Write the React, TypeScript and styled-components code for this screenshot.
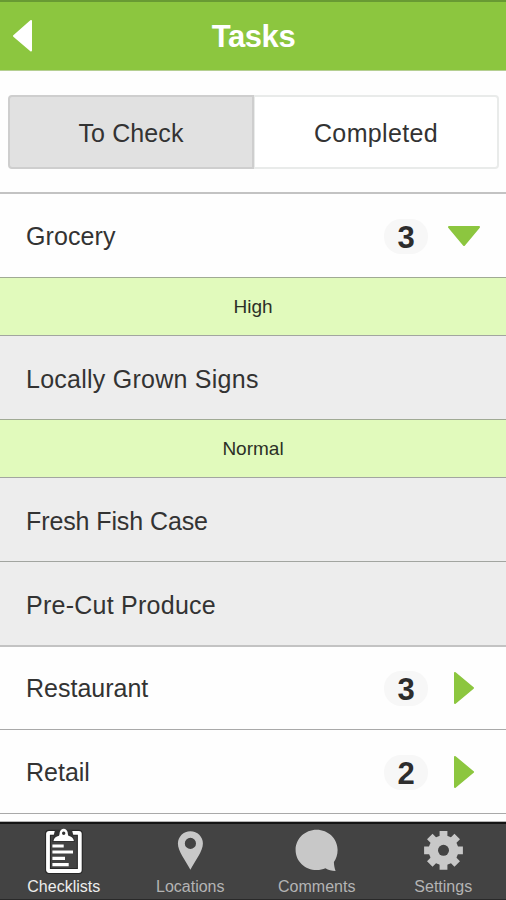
import React from 'react';
import styled, { createGlobalStyle } from 'styled-components';

const GlobalStyle = createGlobalStyle`
  * { box-sizing: border-box; }
  body {
    margin: 0;
    background: #fff;
    color: #333;
    font-family: "Liberation Sans", Arial, sans-serif;
  }
`;

const Screen = styled.div`
  width: 506px;
  height: 900px;
  display: flex;
  flex-direction: column;
  overflow: hidden;
  background: #fefefe;
`;

const Header = styled.header`
  flex: none;
  height: 71px;
  display: grid;
  grid-template-columns: 46px 1fr 46px;
  align-items: center;
  background: #8cc63f;
  border-top: 2px solid #689a33;
  border-bottom: 1px solid #b5cf92;
`;

const BackButton = styled.button`
  height: 40px;
  padding: 0 0 0 12px;
  border: 0;
  background: none;
  display: flex;
  align-items: center;
`;

const Title = styled.h1`
  margin: 0;
  padding: 2px 0 0 1px;
  text-align: center;
  color: #fff;
  font-size: 31px;
  line-height: 36px;
  letter-spacing: -0.4px;
`;

const Segments = styled.div`
  flex: none;
  height: 121px;
  padding: 24px 7px 23px 8px;
  display: flex;
`;

const Segment = styled.button<{ $active?: boolean }>`
  flex: ${p => (p.$active ? '0 0 246px' : '1')};
  padding: 2px 0 0;
  border: 2px solid ${p => (p.$active ? '#cecece' : '#e9ebea')};
  border-left-width: ${p => (p.$active ? '2px' : '1px')};
  border-radius: ${p => (p.$active ? '4px 0 0 4px' : '0 4px 4px 0')};
  background: ${p => (p.$active ? '#e1e1e1' : '#fff')};
  color: #333;
  font: 25px "Liberation Sans", Arial, sans-serif;
  letter-spacing: ${p => (p.$active ? '0.1px' : '0.35px')};
`;

const List = styled.main`
  flex: 1;
  min-height: 0;
  overflow: hidden;
`;

const CategoryRow = styled.div<{ $height: number; $soft?: boolean }>`
  height: ${p => p.$height}px;
  padding: 0 17px 0 26px;
  display: grid;
  grid-template-columns: 1fr 44px 61px;
  align-items: center;
  border-top: ${p => (p.$soft ? '2px solid #c3c3c3' : '1px solid #a9a9a9')};
  background: #fefefe;
`;

const TaskRow = styled.div`
  height: 84px;
  padding: 2px 26px 0;
  display: flex;
  align-items: center;
  border-top: 1px solid #a2a5a0;
  background: #ededed;
`;

const Label = styled.span<{ $spacing?: number }>`
  font-size: 25px;
  line-height: 30px;
  letter-spacing: ${p => p.$spacing ?? 0.25}px;
`;

const PriorityRow = styled.div`
  height: 58px;
  padding-top: 1px;
  display: flex;
  align-items: center;
  justify-content: center;
  border-top: 1px solid #a0aa94;
  background: #e1fabc;
  font-size: 19px;
  color: #2c3026;
`;

const Count = styled.span`
  width: 44px;
  height: 35px;
  margin-top: 1px;
  border-radius: 17px;
  background: #f7f7f7;
  text-align: center;
  font-size: 31px;
  font-weight: bold;
  line-height: 37px;
  color: #2d2d2d;
`;

const ArrowSlot = styled.span`
  display: flex;
  justify-content: center;
  padding-left: 10px;
`;

const ListEnd = styled.div`
  height: 1px;
  background: #a9a9a9;
`;

const TabBar = styled.nav`
  flex: none;
  height: 78px;
  display: grid;
  grid-template-columns: repeat(4, 1fr);
  background: #434343;
  border-top: 2px solid #141414;
  border-bottom: 1px solid #292929;
  box-shadow: 0 -1px 0 #b4b4b4;
`;

const Tab = styled.button<{ $active?: boolean }>`
  padding: 4px 0 0;
  border: 0;
  background: none;
  display: flex;
  flex-direction: column;
  align-items: center;
  color: ${p => (p.$active ? '#fff' : '#c8c8c8')};
  font: 16px "Liberation Sans", Arial, sans-serif;
`;

const TabIcon = styled.svg`
  display: block;
  width: 44px;
  height: 48px;
  flex: none;
`;

const TabLabel = styled.span<{ $active?: boolean }>`
  padding-left: 1px;
  margin-top: 1px;
  line-height: 20px;
  color: ${p => (p.$active ? '#ededed' : '#b4b4b4')};
`;

const Arrow = ({ open }: { open?: boolean }) =>
  open ? (
    <svg width="34" height="22" viewBox="0 0 34 22">
      <path d="M2 2h30L17 20z" fill="#8cc63f" stroke="#8cc63f" strokeWidth="2" strokeLinejoin="round" />
    </svg>
  ) : (
    <svg width="22" height="34" viewBox="0 0 22 34">
      <path d="M2 2v30L20 17z" fill="#8cc63f" stroke="#8cc63f" strokeWidth="2" strokeLinejoin="round" />
    </svg>
  );

const ClipboardIcon = () => (
  <TabIcon viewBox="0 0 44 48">
    <rect x="7" y="4.800" width="31.800" height="38.200" rx="1" fill="#434343" stroke="#282828" strokeWidth="6" />
    <rect x="7" y="4.800" width="31.800" height="38.200" rx="1" fill="none" stroke="#fff" strokeWidth="3.800" />
    <path d="M14 2h17l3 12H11z" fill="#333" />
    <path
      fillRule="evenodd"
      d="M12.500 13c.4-3 2.500-4.500 5.500-5.200.7-1.200.5-2.500.8-3.700C19.400 2 20.700.7 22.700.7s3.300 1.300 3.900 3.400c.3 1.200.1 2.500.8 3.700 3 .7 5.100 2.200 5.500 5.200zM22.700 3.500a1.700 1.700 0 1 0 0 3.400 1.700 1.700 0 0 0 0-3.400z"
      fill="#fff"
    />
    <path d="M11.400 18h11.300M11.400 24H32M11.400 30.300H24M11.400 36.700h16.300" stroke="#fff" strokeWidth="3.200" />
  </TabIcon>
);

const PinIcon = () => (
  <TabIcon viewBox="0 0 44 48">
    <path
      fillRule="evenodd"
      d="M22.400 3.200c-7 0-12.500 5.400-12.500 12.300 0 7.800 7.500 16.800 12.500 26.200 5-9.400 12.500-18.400 12.500-26.200 0-6.900-5.500-12.300-12.500-12.300zm0 6.600a5.600 5.600 0 1 1 0 11.200 5.600 5.600 0 0 1 0-11.200z"
      fill="currentColor"
    />
  </TabIcon>
);

const BubbleIcon = () => (
  <TabIcon viewBox="0 0 44 48">
    <path
      d="M22.600 1.700C11 1.700 1.600 10.600 1.600 21.900S11 42 22.600 42c3.300 0 6.200-.6 8.900-1.800 2.700 1.700 6.200 2.600 10.100 2.900-1-2.700-1.600-5.800-1.700-9 2.300-3.300 3.700-7.500 3.700-12.200C43.600 10.600 34.200 1.700 22.600 1.700z"
      fill="currentColor"
    />
  </TabIcon>
);

const GearIcon = () => (
  <TabIcon viewBox="0 0 44 48">
    <g transform="translate(22.500 22.300)" fill="currentColor">
      {[0, 45, 90, 135].map(angle => (
        <path key={angle} d="M-5.200-12-3.900-14.500V-19.400h7.800V-14.500L5.200-12v24l-1.300 2.500v4.900h-7.800v-4.900L-5.200 12z" transform={`rotate(${angle})`} />
      ))}
      <circle r="14.800" />
      <circle r="5.500" fill="#434343" />
    </g>
  </TabIcon>
);

const tabs = [
  { label: 'Checklists', Icon: ClipboardIcon, active: true },
  { label: 'Locations', Icon: PinIcon },
  { label: 'Comments', Icon: BubbleIcon },
  { label: 'Settings', Icon: GearIcon },
];

export default function App() {
  return (
    <>
      <GlobalStyle />
      <Screen>
        <Header>
          <BackButton aria-label="Back">
            <svg width="22" height="34" viewBox="0 0 22 34">
              <path d="M19 2v29.500L2 17z" fill="#fff" stroke="#fff" strokeWidth="2" strokeLinejoin="round" />
            </svg>
          </BackButton>
          <Title>Tasks</Title>
        </Header>
        <Segments>
          <Segment $active>To Check</Segment>
          <Segment>Completed</Segment>
        </Segments>
        <List>
          <CategoryRow $height={85} $soft>
            <Label $spacing={0.1}>Grocery</Label>
            <Count>3</Count>
            <ArrowSlot><Arrow open /></ArrowSlot>
          </CategoryRow>
          <PriorityRow>High</PriorityRow>
          <TaskRow><Label>Locally Grown Signs</Label></TaskRow>
          <PriorityRow>Normal</PriorityRow>
          <TaskRow><Label $spacing={-0.1}>Fresh Fish Case</Label></TaskRow>
          <TaskRow><Label>Pre-Cut Produce</Label></TaskRow>
          <CategoryRow $height={84} $soft>
            <Label $spacing={0}>Restaurant</Label>
            <Count>3</Count>
            <ArrowSlot><Arrow /></ArrowSlot>
          </CategoryRow>
          <CategoryRow $height={84}>
            <Label $spacing={0}>Retail</Label>
            <Count>2</Count>
            <ArrowSlot><Arrow /></ArrowSlot>
          </CategoryRow>
          <ListEnd />
        </List>
        <TabBar>
          {tabs.map(({ label, Icon, active }) => (
            <Tab key={label} $active={active}>
              <Icon />
              <TabLabel $active={active}>{label}</TabLabel>
            </Tab>
          ))}
        </TabBar>
      </Screen>
    </>
  );
}
